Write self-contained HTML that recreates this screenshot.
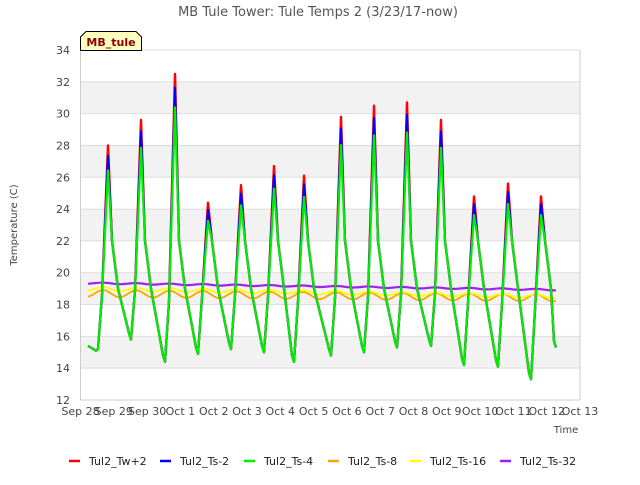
<!DOCTYPE html>
<html><head><meta charset="utf-8"><style>
body{margin:0;width:640px;height:480px;background:#fff;overflow:hidden;font-family:"Liberation Sans","DejaVu Sans",sans-serif}
</style></head><body>
<svg id="s" width="640" height="480" xmlns="http://www.w3.org/2000/svg" font-family="DejaVu Sans, Liberation Sans, sans-serif">
<rect width="640" height="480" fill="#fff"/>
<g id="bands"></g>
<text x="318" y="16" text-anchor="middle" font-size="13" fill="#555">MB Tule Tower: Tule Temps 2 (3/23/17-now)</text>
<text x="17" y="225" font-size="10" fill="#444" text-anchor="middle" transform="rotate(-90 17 225)">Temperature (C)</text>
<text x="566" y="433" font-size="10" fill="#444" text-anchor="middle">Time</text>
<g id="lines"></g>
<path d="M80.5,50.5 L80.5,37 L86,31.5 L136,31.5 L141.5,37 L141.5,50.5 Z" fill="#ffffc0" stroke="#000" stroke-width="1"/>
<text x="111" y="46" text-anchor="middle" font-size="11" font-weight="bold" fill="#8b0000">MB_tule</text>
<g id="legend" font-size="11" fill="#222"></g>
</svg>
<script>
var ns="http://www.w3.org/2000/svg";
function el(t,a,p){var e=document.createElementNS(ns,t);for(var k in a)e.setAttribute(k,a[k]);p.appendChild(e);return e;}
var B=document.getElementById('bands'),L=document.getElementById('lines'),G=document.getElementById('legend');
function Y(t){return 400-(t-12)*350/22;}
for(var t=12;t<=34;t+=2){
 if(t%4==2&&t<34) el('rect',{x:80.5,y:Y(t+2),width:499.5,height:Y(t)-Y(t+2),fill:'#f2f2f2'},B);
 el('line',{x1:80.5,x2:580,y1:Y(t),y2:Y(t),stroke:'#ddd','stroke-width':1},B);
 var tx=el('text',{x:70,y:Y(t)+4,'text-anchor':'end','font-size':11,fill:'#444'},B);tx.textContent=t;
}
el('line',{x1:80.5,x2:80.5,y1:50,y2:400,stroke:'#ccc'},B);
el('line',{x1:580,x2:580,y1:50,y2:400,stroke:'#ccc'},B);
el('line',{x1:80.5,x2:580,y1:400,y2:400,stroke:'#ccc'},B);
var labs=['Sep 28','Sep 29','Sep 30','Oct 1','Oct 2','Oct 3','Oct 4','Oct 5','Oct 6','Oct 7','Oct 8','Oct 9','Oct 10','Oct 11','Oct 12','Oct 13'];
for(var i=0;i<16;i++){var x=80.5+i*499.5/15;var tx=el('text',{x:x,y:415,'text-anchor':'middle','font-size':11,fill:'#444'},B);tx.textContent=labs[i];}
var mins=[[88,15.4],[98,15.2],[131,15.8],[165,14.4],[198,14.9],[231,15.2],[264,15.0],[294,14.4],[331,14.8],[364,15.0],[397,15.3],[431,15.4],[464,14.2],[498,14.1],[531,13.3]];
var peaks=[28,29.6,32.5,24.4,25.5,26.7,26.1,29.8,30.5,30.7,29.6,24.8,25.6,24.8];
function series(f){var p=[[88,15.4],[96,15.1]];
 for(var i=1;i<mins.length;i++){var m=mins[i],pk=peaks[i-1];var xp=m[0]+10;
  p.push([m[0],m[1]]);p.push([m[0]+4,(m[1]+22)/2]);p.push([xp,15+(pk-15)*f]);
  var nx=i+1<mins.length?mins[i+1][0]:556,nv=i+1<mins.length?mins[i+1][1]:15.3;
  p.push([xp+4,22]);p.push([xp+10,19]);p.push([nx-2,nv+0.4]);}
 p.push([556,15.3]);return p;}
function draw(p,c,w){el('polyline',{points:p.map(function(q){return q[0]+','+Y(q[1]).toFixed(1)}).join(' '),fill:'none',stroke:c,'stroke-width':w,'stroke-linejoin':'round'},L);}
function soil(base,amp,drift){var p=[];for(var x=88;x<=556;x+=2){var d=(x-88)/33.3;p.push([x,base+drift*d+amp*Math.sin((d-0.2)*2*Math.PI)]);}return p;}
draw(soil(18.7,0.22,-0.02),'orange',1.8);
draw(soil(19.0,0.12,-0.035),'yellow',1.8);
draw(soil(19.35,0.04,-0.03),'#a020f0',2.2);
draw(series(1),'red',2.4);
draw(series(0.95),'blue',2.2);
draw(series(0.88),'#00ee00',2.2);
var leg=[['red','Tul2_Tw+2',69],['blue','Tul2_Ts-2',160],['#00ee00','Tul2_Ts-4',244],['orange','Tul2_Ts-8',328],['yellow','Tul2_Ts-16',410],['#a020f0','Tul2_Ts-32',500]];
leg.forEach(function(l){el('line',{x1:l[2],x2:l[2]+11,y1:461,y2:461,stroke:l[0],'stroke-width':2.5},G);var t=el('text',{x:l[2]+20,y:465},G);t.textContent=l[1];});
</script>
</body></html>
